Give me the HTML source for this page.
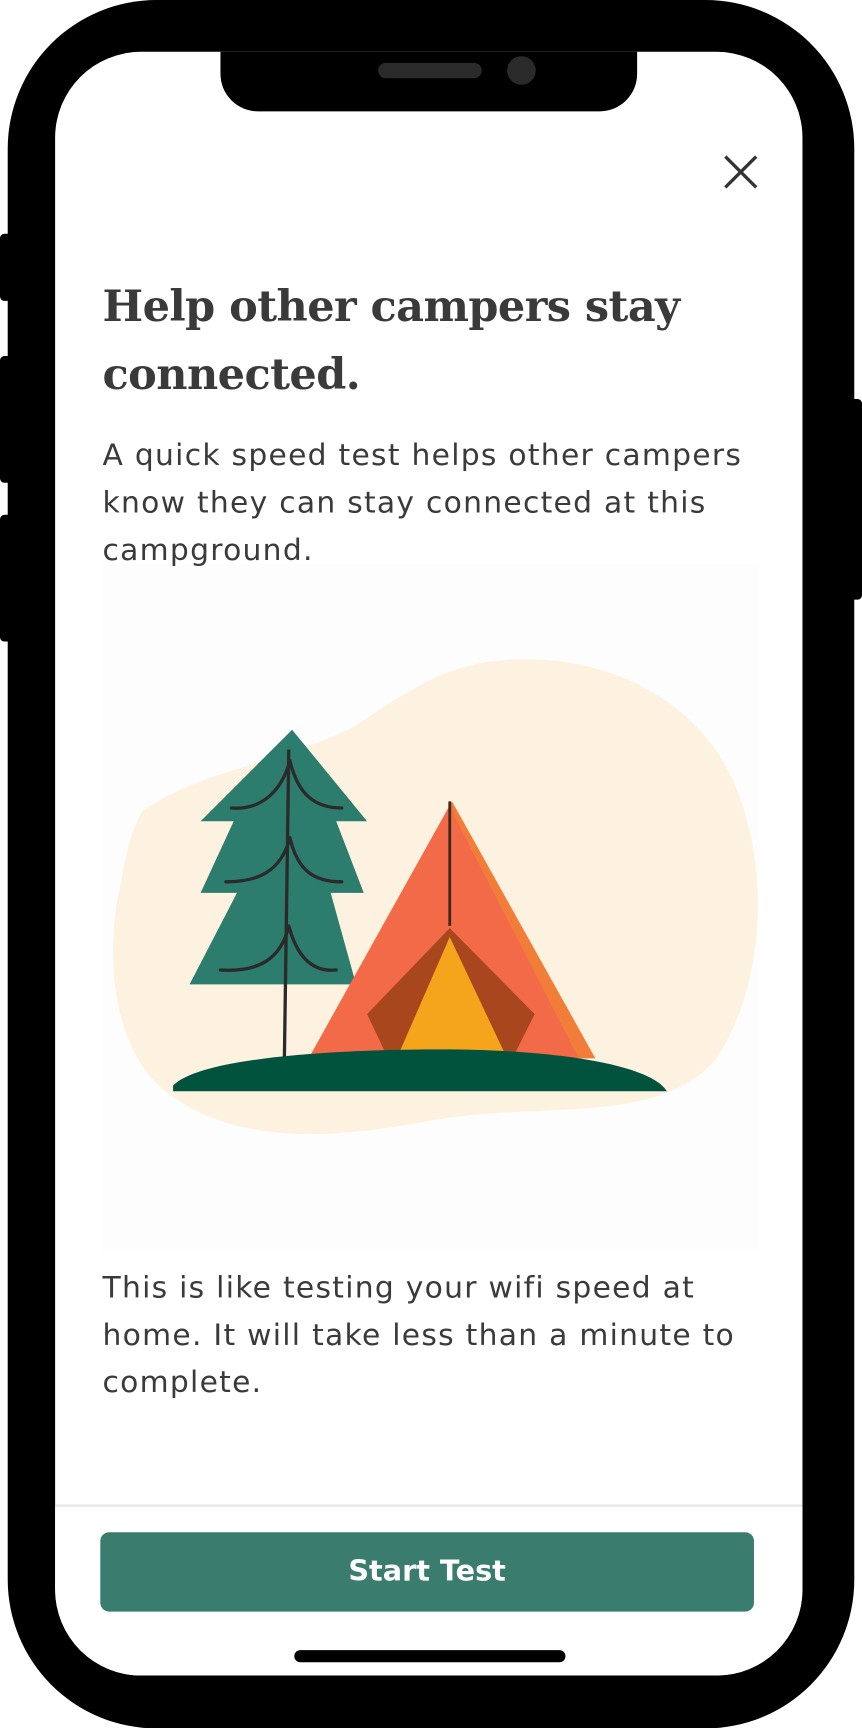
<!DOCTYPE html>
<html><head><meta charset="utf-8"><style>
html,body{margin:0;padding:0;background:#fff;width:862px;height:1728px;overflow:hidden}
#w{position:absolute;left:0;top:0;width:782px;height:1568px;transform:scale(1.10230);transform-origin:0 0}
.a{position:absolute}
.serif{font-family:"DejaVu Serif","Liberation Serif",serif;font-weight:bold;color:#3a3a3a}
.sans{font-family:"DejaVu Sans","Liberation Sans",sans-serif;color:#3a3a3a;white-space:nowrap}
.p{font-size:27px;line-height:43px;letter-spacing:1.15px}
</style></head><body><div id="w">
<div class="a" style="left:0;top:212px;width:14px;height:61px;background:#000;border-radius:4px"></div>
<div class="a" style="left:0;top:323px;width:14px;height:115px;background:#000;border-radius:4px"></div>
<div class="a" style="left:0;top:467px;width:14px;height:115px;background:#000;border-radius:4px"></div>
<div class="a" style="left:768px;top:362px;width:14px;height:182px;background:#000;border-radius:4px"></div>
<div class="a" style="left:7px;top:0;width:768px;height:1568px;background:#000;border-radius:135px"></div>
<div class="a" style="left:50px;top:47px;width:678px;height:1473px;background:#fff;border-radius:78px;overflow:hidden">
  <div class="a" style="left:150px;top:-10px;width:378px;height:64px;background:#000;border-radius:0 0 34px 34px"></div>
  <div class="a" style="left:293px;top:10px;width:94px;height:14px;background:#2a2a2a;border-radius:7px"></div>
  <div class="a" style="left:410px;top:4px;width:26px;height:26px;background:#2a2a2a;border-radius:50%"></div>
  <svg class="a" style="left:605px;top:92px" width="34" height="34" viewBox="0 0 34 34"><path d="M3 3L31 31M31 3L3 31" stroke="#333" stroke-width="3" fill="none"/></svg>
  <div class="a" style="left:43px;top:465px;width:595px;height:623px;background:#fdfdfd"></div>
  <div class="a serif" style="left:43px;top:200px;width:600px;font-size:39px;line-height:62px;letter-spacing:-0.5px">Help other campers stay connected.</div>
  <div class="a sans p" style="left:43px;top:345px">A quick speed test helps other campers<br>know they can stay connected at this<br>campground.</div>
  <svg class="a" style="left:-50px;top:-47px" width="782" height="1568" viewBox="0 0 782 1568">
    <path d="M130 735 C180 700 260 690 320 660 C380 620 410 600 470 598 C560 596 640 640 670 720 C700 800 690 900 650 960 C600 1020 500 1000 400 1015 C320 1030 220 1045 150 990 C100 950 95 860 110 800 C115 770 120 750 130 735Z" fill="#fdf2e0"/>
    <path d="M265 662 L333 745 L305 745 L330 810 L300 810 L323 893 L172 893 L215 810 L182 810 L212 745 L182 745 Z" fill="#2d7d6e"/>
    <path d="M262 680 L258 960" stroke="#2a2a2a" stroke-width="3" fill="none"/>
    <g stroke="#2a2a2a" stroke-width="3" fill="none" stroke-linecap="round">
      <path d="M263 690 C255 720 235 735 210 733 M263 690 C270 720 285 733 310 733"/>
      <path d="M263 760 C255 790 235 800 205 800 M263 760 C270 790 285 800 310 800"/>
      <path d="M262 840 C255 870 235 882 200 880 M262 840 C270 870 285 882 305 880"/>
    </g>
    <path d="M410 727 L540 960 L280 960 Z" fill="#f26a48"/>
    <path d="M410 727 L540 960 L525 960 L412 740Z" fill="#f28a30" opacity=".6"/>
    <path d="M408 727 L408 840" stroke="#3a2a20" stroke-width="2.5"/>
    <path d="M408 842 L485 920 L465 960 L352 960 L333 920 Z" fill="#a8461e"/>
    <path d="M408 850 L460 960 L360 960 Z" fill="#f4a51c"/>
    <path d="M157 985 C180 960 300 952 400 952 C500 952 590 965 605 990 L157 990 Z" fill="#02533d"/>
  </svg>
  <div class="a sans p" style="left:43px;top:1100px">This is like testing your wifi speed at<br>home. It will take less than a minute to<br>complete.</div>
  <div class="a" style="left:0;top:1318px;width:678px;height:2px;background:#e6e6e6;box-shadow:0 1px 3px rgba(0,0,0,.08)"></div>
  <div class="a" style="left:0;top:1320px;width:678px;height:160px;background:#fff"></div>
  <div class="a sans" style="left:41px;top:1343px;width:593px;height:72px;background:#3a7d6f;border-radius:8px;color:#fff;font-size:26px;font-weight:bold;text-align:center;line-height:72px">Start Test</div>
  <div class="a" style="left:217px;top:1450px;width:246px;height:11px;background:#000;border-radius:6px"></div>
</div>
</div></body></html>
